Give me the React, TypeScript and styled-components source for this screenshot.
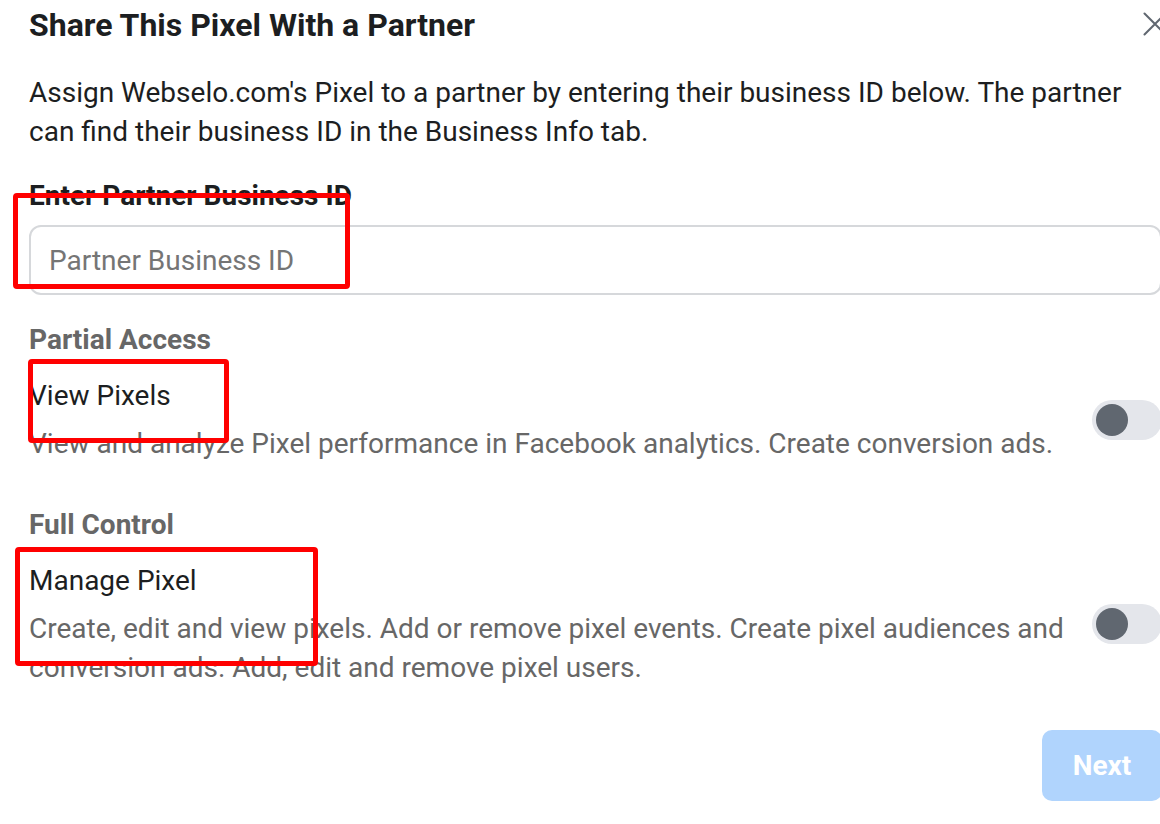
import React from 'react';
import styled, { createGlobalStyle } from 'styled-components';

const GlobalStyle = createGlobalStyle`
	html, body {
		margin: 0;
		padding: 0;
		background: #ffffff;
		overflow: hidden;
	}
	body {
		font-family: Roboto, "Liberation Sans", Arial, sans-serif;
		-webkit-font-smoothing: antialiased;
	}
`

const Dialog = styled.div`
	position: relative;
	display: flex;
	flex-direction: column;
	width: 1133px;
	padding: 0 0 0 29px;
	color: #1c1e21;
`

const Header = styled.div`
	display: flex;
	align-items: center;
	justify-content: space-between;
	height: 50px;
	h2 {
		margin: 0;
		font-size: 32px;
		font-weight: 700;
		line-height: 38px;
	}
`

const CloseButton = styled.button`
	display: flex;
	align-items: center;
	justify-content: center;
	width: 24px;
	height: 24px;
	margin-right: -5px;
	margin-top: -3px;
	padding: 0;
	border: none;
	background: none;
	color: #606770;
`

const Intro = styled.p`
	margin: 23px 0 0;
	font-size: 28px;
	line-height: 39px;
	color: #1c1e21;
`

const FieldLabel = styled.label`
	display: block;
	margin-top: 29px;
	font-size: 28px;
	font-weight: 700;
	line-height: 32px;
	color: #1c1e21;
`

const TextInput = styled.input`
	display: block;
	box-sizing: border-box;
	width: 100%;
	height: 70px;
	margin-top: 13px;
	padding: 0 18px;
	border: 2px solid #d6d8db;
	border-radius: 12px;
	font-family: inherit;
	font-size: 28px;
	color: #1c1e21;
	outline: none;
	::placeholder {
		color: #7a7a7a;
	}
`

const OptionGroup = styled.div`
	margin-bottom: 17px;
`

const SectionTitle = styled.div`
	margin-top: 29px;
	font-size: 28px;
	font-weight: 700;
	line-height: 32px;
	color: #676767;
`

const OptionRow = styled.div`
	display: grid;
	grid-template-columns: 1fr 70px;
	column-gap: 24px;
	align-items: center;
	margin-top: 24px;
`

const OptionName = styled.div`
	font-size: 28px;
	line-height: 32px;
	color: #1c1e21;
`

const OptionDesc = styled.div`
	margin-top: 12px;
	font-size: 28px;
	line-height: 39px;
	color: #676767;
`

const Switch = styled.div<{ $on?: boolean }>`
	position: relative;
	width: 70px;
	height: 40px;
	margin-bottom: 4px;
	border-radius: 20px;
	background: ${({ $on }) => ($on ? '#1877f2' : '#e4e6eb')};
	&::after {
		content: "";
		position: absolute;
		top: 4px;
		left: ${({ $on }) => ($on ? '34px' : '4px')};
		width: 32px;
		height: 32px;
		border-radius: 50%;
		background: ${({ $on }) => ($on ? '#ffffff' : '#606770')};
	}
`

const Footer = styled.div`
	display: flex;
	justify-content: flex-end;
	margin-top: 26px;
`

const NextButton = styled.button`
	width: 120px;
	height: 71px;
	border: none;
	border-radius: 10px;
	background: #b0d4fd;
	color: #ffffff;
	font-family: inherit;
	font-size: 28px;
	font-weight: 700;
	cursor: default;
`

const Highlight = styled.div<{ $x: number; $y: number; $w: number; $h: number }>`
	position: absolute;
	left: ${({ $x }) => $x}px;
	top: ${({ $y }) => $y}px;
	width: ${({ $w }) => $w}px;
	height: ${({ $h }) => $h}px;
	box-sizing: border-box;
	border: 5px solid #ff0000;
	border-radius: 4px;
	pointer-events: none;
`

const options = [
	{
		section: 'Partial Access',
		name: 'View Pixels',
		desc: 'View and analyze Pixel performance in Facebook analytics. Create conversion ads.',
	},
	{
		section: 'Full Control',
		name: 'Manage Pixel',
		desc: 'Create, edit and view pixels. Add or remove pixel events. Create pixel audiences and conversion ads. Add, edit and remove pixel users.',
	},
]

const App = () => {
	return (
		<>
			<GlobalStyle />
			<Dialog>
				<Header>
					<h2>Share This Pixel With a Partner</h2>
					<CloseButton aria-label="Close">
						<svg width="24" height="24" viewBox="0 0 24 24">
							<path d="M1.5 1.5 L22.5 22.5 M22.5 1.5 L1.5 22.5" stroke="currentColor" strokeWidth="2" strokeLinecap="round" />
						</svg>
					</CloseButton>
				</Header>

				<Intro>
					Assign Webselo.com's Pixel to a partner by entering their business ID below. The partner can find their business ID in the Business Info tab.
				</Intro>

				<FieldLabel htmlFor="partner-id">Enter Partner Business ID</FieldLabel>
				<TextInput id="partner-id" placeholder="Partner Business ID" />

				{options.map((o, i) => (
					<OptionGroup key={i}>
						<SectionTitle>{o.section}</SectionTitle>
						<OptionRow>
							<div>
								<OptionName>{o.name}</OptionName>
								<OptionDesc>{o.desc}</OptionDesc>
							</div>
							<Switch />
						</OptionRow>
					</OptionGroup>
				))}

				<Footer>
					<NextButton>Next</NextButton>
				</Footer>

				<Highlight $x={13} $y={193} $w={337} $h={96} />
				<Highlight $x={28} $y={359} $w={201} $h={84} />
				<Highlight $x={15} $y={547} $w={303} $h={119} />
			</Dialog>
		</>
	)
}

export default App
